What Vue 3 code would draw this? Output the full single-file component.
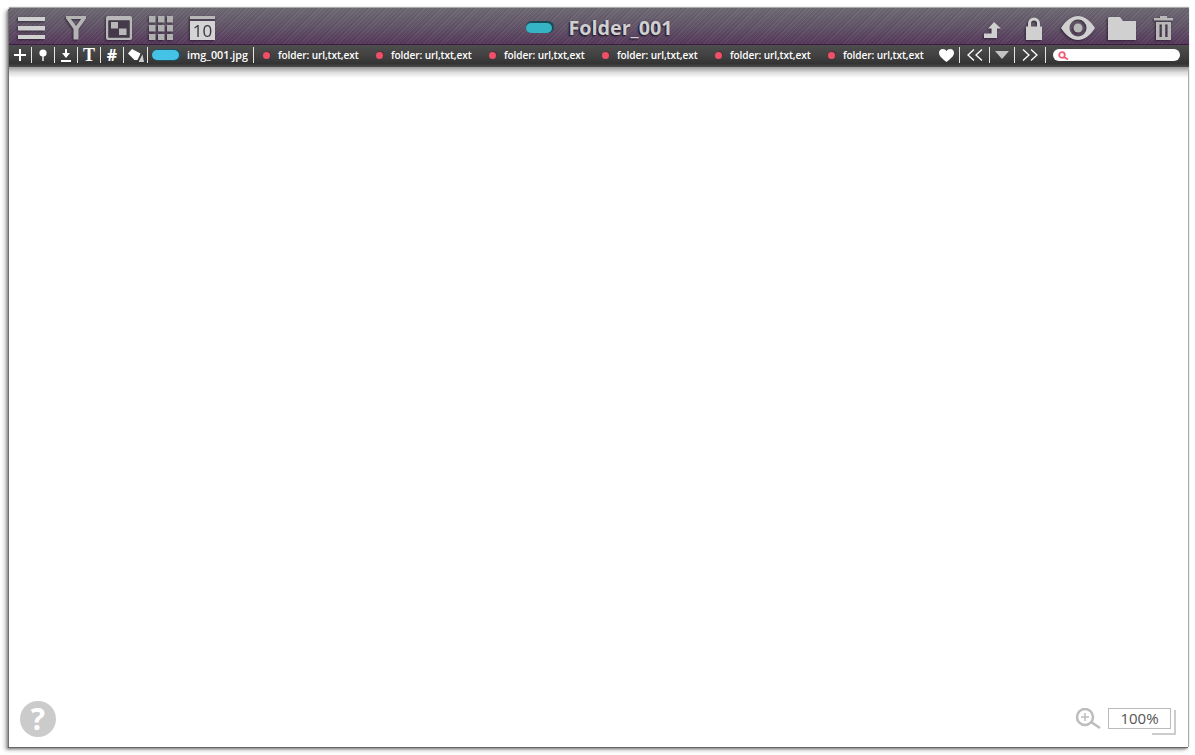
<script setup>
const tags = Array.from({ length: 6 }, (_, i) => ({ id: i, label: 'folder: url,txt,ext' }))
</script>

<template>
  <div class="page">
    <div class="window">
      <header class="titlebar">
        <div class="title-left">
          <svg class="ico" width="27" height="24" viewBox="0 0 27 24"><path d="M0 1h27v4H0zM0 10h27v4.500H0zM0 19h27v4H0z" /></svg>
          <svg class="ico ico-filter" width="20" height="24" viewBox="0 0 20 24"><path d="M0 0h20v2.500L12.500 13v10.500h-5V13L0 2.500zM5 3l5 7 5-7z" fill-rule="evenodd" /></svg>
          <svg class="ico ico-box" width="26" height="24" viewBox="0 0 26 24"><path d="M2 0h22a2 2 0 0 1 2 2v20a2 2 0 0 1-2 2H2a2 2 0 0 1-2-2V2a2 2 0 0 1 2-2zM2.500 4.500v17h21v-17z" fill-rule="evenodd" /><path d="M2.500 4.500h21v17h-21z" fill="#453a4a" /><path d="M5 6h7v6.500H5z" /><path d="M13 12.500h7.500V19H13z" /></svg>
          <svg class="ico ico-grid" width="24" height="24" viewBox="0 0 24 24"><path d="M0 0h6.500v6.500H0zM9 0h6.500v6.500H9zM18 0h6v6.500h-6zM0 9h6.500v6.500H0zM9 9h6.500v6.500H9zM18 9h6v6.500h-6zM0 18h6.500v6H0zM9 18h6.500v6H9zM18 18h6v6h-6z" /></svg>
          <div class="calendar"><span>10</span></div>
        </div>

        <div class="title-center">
          <span class="pill pill-dark"></span>
          <span class="title-text">Folder_001</span>
        </div>

        <div class="title-right">
          <svg class="ico" width="17" height="16" viewBox="0 0 17 16"><path d="M10 0l7 6.500h-4V16H0v-4.500h7.500V6.500H4z" /></svg>
          <svg class="ico" width="18" height="23" viewBox="0 0 18 23"><path d="M1 9.500h2V6.500a6 6 0 0 1 12 0v3h2V23H1zM6 9.500h6V6.500a3 3 0 0 0-6 0z" fill-rule="evenodd" /></svg>
          <svg class="ico" width="34" height="24" viewBox="0 0 34 24"><path d="M0 12C5 4 11 0 17 0s12 4 17 12c-5 8-11 12-17 12S5 20 0 12zM17 3.500a8.500 8.500 0 1 0 0 17 8.500 8.500 0 0 0 0-17z" fill-rule="evenodd" /><circle cx="17" cy="12" r="4.500" fill="#b8b8b8" /></svg>
          <svg class="ico" width="28" height="23" viewBox="0 0 28 23"><path d="M1 0h11l3 4h13v19H0V1z" /></svg>
          <svg class="ico ico-trash" width="19" height="24" viewBox="0 0 19 24"><path d="M6 0h7v2h6v2.500H0V2h6zM2 6h15v18H2zM5.500 8.500v12.500h2.300V8.500zM11.200 8.500v12.500h2.300V8.500z" fill-rule="evenodd" /></svg>
        </div>
      </header>

      <nav class="toolbar">
        <div class="tool w23"><svg width="12" height="12" viewBox="0 0 12 12"><path d="M5 0h2v5h5v2H7v5H5V7H0V5h5z" /></svg></div>
        <div class="tool w23"><svg width="8" height="12" viewBox="0 0 8 12"><circle cx="4" cy="4" r="3.600" /><path d="M3.300 6h1.400v6H3.300z" /></svg></div>
        <div class="tool w23"><svg width="10" height="13" viewBox="0 0 10 13"><path d="M4 0h2v4h3L5 9 1 4h3zM0 11h10v2H0z" /></svg></div>
        <div class="tool w23 tool-t">T</div>
        <div class="tool w23 tool-hash">#</div>
        <div class="tool w24"><svg width="16" height="13" viewBox="0 0 16 13"><path d="M0 4.500 4 0l8.500 4.500-3 6.500H6.500z" /><path d="M11 12l3.500-6.500L16 13H11z" fill-opacity="0.75" /></svg></div>
        <div class="file-chip">
          <span class="pill"></span>
          <span class="file-name">img_001.jpg</span>
        </div>
        <div class="tags">
          <div v-for="tag in tags" :key="tag.id" class="tag">
            <span class="tag-dot"></span>
            <span class="tag-label">{{ tag.label }}</span>
          </div>
        </div>
        <div class="tool w26"><svg width="15" height="13" viewBox="0 0 15 13"><path d="M7.500 13C3 9.500 0 7 0 3.800 0 1.500 1.800 0 3.800 0c1.600 0 3 .9 3.700 2.300C8.200.9 9.600 0 11.200 0 13.200 0 15 1.500 15 3.800 15 7 12 9.500 7.500 13z" /></svg></div>
        <div class="tool w30"><svg class="line" width="16" height="12" viewBox="0 0 16 12"><path d="M7 .5 1 6l6 5.500M15 .5 9 6l6 5.500" /></svg></div>
        <div class="tool w25"><svg class="tri" width="14" height="8" viewBox="0 0 14 8"><path d="M0 0h14L7 8z" /></svg></div>
        <div class="tool w31"><svg class="line" width="16" height="12" viewBox="0 0 16 12"><path d="M1 .5 7 6l-6 5.500M9 .5l6 5.500-6 5.500" /></svg></div>
        <div class="search">
          <svg width="11" height="9" viewBox="0 0 11 9"><circle cx="4" cy="4" r="2.800" /><path d="M6 6l4 2.500" /></svg>
        </div>
      </nav>

      <main class="content">
        <div class="content-shade"></div>
        <footer class="footer">
          <div class="help">?</div>
          <div class="zoom">
            <svg width="27" height="21" viewBox="0 0 27 21"><circle cx="10" cy="9" r="8" /><path d="M6 9h8M10 5v8" class="thin" /><path d="M16 14l9 6" /></svg>
            <div class="zoom-box">100%</div>
          </div>
        </footer>
      </main>
    </div>
  </div>
</template>

<style>
html,
body {
  margin: 0;
  background: #fff;
}
</style>

<style scoped>
.page {
  width: 1195px;
  height: 755px;
  box-sizing: border-box;
  padding: 8px 6px 8px 9px;
  overflow: hidden;
  font-family: "Open Sans", "Liberation Sans", sans-serif;
}

.window {
  height: 100%;
  display: flex;
  flex-direction: column;
  background: #fff;
  box-shadow: 0 -1px 1px #aaa, -1px 1px 0 #666, -2px 2px 2px #888, -4px 3px 4px #bbb;
}

/* title bar */
.titlebar {
  height: 37px;
  flex-shrink: 0;
  box-sizing: border-box;
  padding-top: 4px;
  display: grid;
  grid-template-columns: 1fr auto 1fr;
  align-items: center;
  background:
    repeating-linear-gradient(135deg, rgba(255, 255, 255, 0.05) 0 1px, rgba(0, 0, 0, 0.05) 1px 2px, transparent 2px 3px),
    linear-gradient(#6c6a72, #625568 50%, #56395c);
  border-bottom: 1px solid #3d1c40;
}

.ico {
  display: block;
  fill: #d0d0d0;
  filter: drop-shadow(-1px 1px 1px rgba(20, 10, 25, 0.6));
}

.ico-filter {
  fill: #b4b4b4;
}

.ico-box {
  fill: #b8b8b8;
}

.ico-grid {
  fill: #b0b0b0;
}

.ico-trash {
  fill: #b8b8b8;
}

.title-left,
.title-right {
  display: flex;
  align-items: center;
}

.title-left {
  padding-left: 9px;
  gap: 21px;
}

.title-left .ico:nth-child(3) {
  margin-left: -1px;
}

.title-left .ico:nth-child(4) {
  margin-left: -4px;
}

.title-right {
  justify-content: flex-end;
  padding-right: 16px;
  gap: 15px;
}

.title-right .ico:first-child {
  margin-right: 9px;
  margin-top: 4px;
}

.title-right .ico:nth-child(3) {
  margin-left: 3px;
}

.title-right .ico:nth-child(4) {
  margin-left: -2px;
  margin-right: 3px;
}

.calendar {
  width: 25px;
  height: 24px;
  box-sizing: border-box;
  margin-left: -4px;
  padding-top: 5px;
  position: relative;
  text-align: center;
  color: #3a3340;
  font: 400 17px/19px "Open Sans", sans-serif;
  background: linear-gradient(#b8b8b8 0 3px, #4d4353 3px 5px, #d4d4d4 5px);
  filter: drop-shadow(-1px 1px 1px rgba(20, 10, 25, 0.6));
}

.calendar span {
  display: block;
}

.title-center {
  display: flex;
  align-items: center;
  gap: 17px;
  padding-right: 6px;
  transform: translate(3px, 0);
}

.title-text {
  color: #cfcfcf;
  font: 700 19.700px/1 "Open Sans", sans-serif;
  text-shadow: -1px 1px 2px rgba(15, 5, 20, 0.95);
}

.pill {
  display: block;
  flex-shrink: 0;
  width: 27px;
  height: 10px;
  border-radius: 5px;
  background: #45c3e6;
  box-shadow: 1px 0 0 1px #22505e;
}

.pill-dark {
  width: 26px;
  background: #34b4c4;
  box-shadow: 1px -1px 0 1px #1a4a55;
}

/* second row */
.toolbar {
  height: 22px;
  flex-shrink: 0;
  display: flex;
  align-items: center;
  box-sizing: border-box;
  padding-bottom: 2px;
  background: linear-gradient(#4e4e4e, #3f3f3f 55%, #333 85%, #4c4c4c);
  color: #fff;
}

.tool {
  height: 16px;
  box-sizing: border-box;
  flex-shrink: 0;
  display: flex;
  align-items: center;
  justify-content: center;
  border-right: 1px solid #e4e4e4;
}

.tool svg {
  fill: #fff;
}

.w23 { width: 23px; }
.w24 { width: 24px; }
.w25 { width: 25px; }
.w26 { width: 26px; }
.w30 { width: 30px; }
.w31 { width: 31px; }

.toolbar .line {
  fill: none;
  stroke: #fff;
  stroke-width: 1.300;
}

.toolbar .tri {
  fill: #c4c4c4;
}

.tool-t {
  font: 700 18px/1 "Liberation Serif", serif;
}

.tool-hash {
  font: 700 16px/1 "Open Sans", sans-serif;
}

.file-chip {
  display: flex;
  align-items: center;
  height: 16px;
  width: 106px;
  flex-shrink: 0;
  box-sizing: border-box;
  padding-left: 4px;
  gap: 8px;
  border-right: 1px solid #e4e4e4;
}

.file-name,
.tag-label {
  line-height: 1;
  white-space: nowrap;
  font-weight: 600;
}

.file-name {
  font-size: 10.800px;
}

.tag-label {
  font-size: 10.100px;
  letter-spacing: -0.100px;
}

.tags {
  display: flex;
  width: 680px;
  flex-shrink: 0;
  box-sizing: border-box;
  padding-left: 9px;
  gap: 16px;
}

.tag {
  display: flex;
  align-items: center;
  gap: 8px;
  width: 97px;
  flex-shrink: 0;
}

.tag-dot {
  width: 7px;
  height: 7px;
  flex-shrink: 0;
  border-radius: 50%;
  background: #ee5068;
  box-shadow: 1px -1px 0 #5a2c38;
}

.search {
  width: 127px;
  height: 12px;
  margin-left: 7px;
  flex-shrink: 0;
  border-radius: 6px;
  background: #fff;
  display: flex;
  align-items: center;
  padding-left: 5px;
  box-sizing: border-box;
}

.search svg {
  fill: none;
  stroke: #f05a72;
  stroke-width: 1.800;
}

/* main canvas */
.content {
  flex: 1;
  display: flex;
  flex-direction: column;
  position: relative;
  border-right: 1px solid #aaa;
}

.content-shade {
  height: 11px;
  background: linear-gradient(#999, #ddd 50%, #fff);
}

.footer {
  margin-top: auto;
  display: flex;
  justify-content: space-between;
  align-items: flex-end;
  padding: 0 17px 10px 11px;
}

.help {
  width: 36px;
  height: 36px;
  border-radius: 50%;
  background: #cbcbcb;
  color: #fff;
  text-align: center;
  font: 700 30px/36px "Open Sans", sans-serif;
}

.zoom {
  display: flex;
  align-items: center;
  gap: 6px;
  margin-bottom: 8px;
}

.zoom svg {
  fill: none;
  stroke: #bdbdbd;
  stroke-width: 2.500;
}

.zoom svg .thin {
  stroke-width: 1.500;
}

.zoom-box {
  width: 63px;
  height: 21px;
  box-sizing: border-box;
  border: 1px solid #bbb;
  position: relative;
  text-align: center;
  color: #555;
  font-size: 15px;
  line-height: 19px;
}

/* bracket in the box's lower right corner */
.zoom-box::after {
  content: "";
  position: absolute;
  right: -6px;
  bottom: -7px;
  width: 24px;
  height: 25px;
  box-sizing: border-box;
  border-right: 2px solid #ccc;
  border-bottom: 2px solid #ccc;
}
</style>
